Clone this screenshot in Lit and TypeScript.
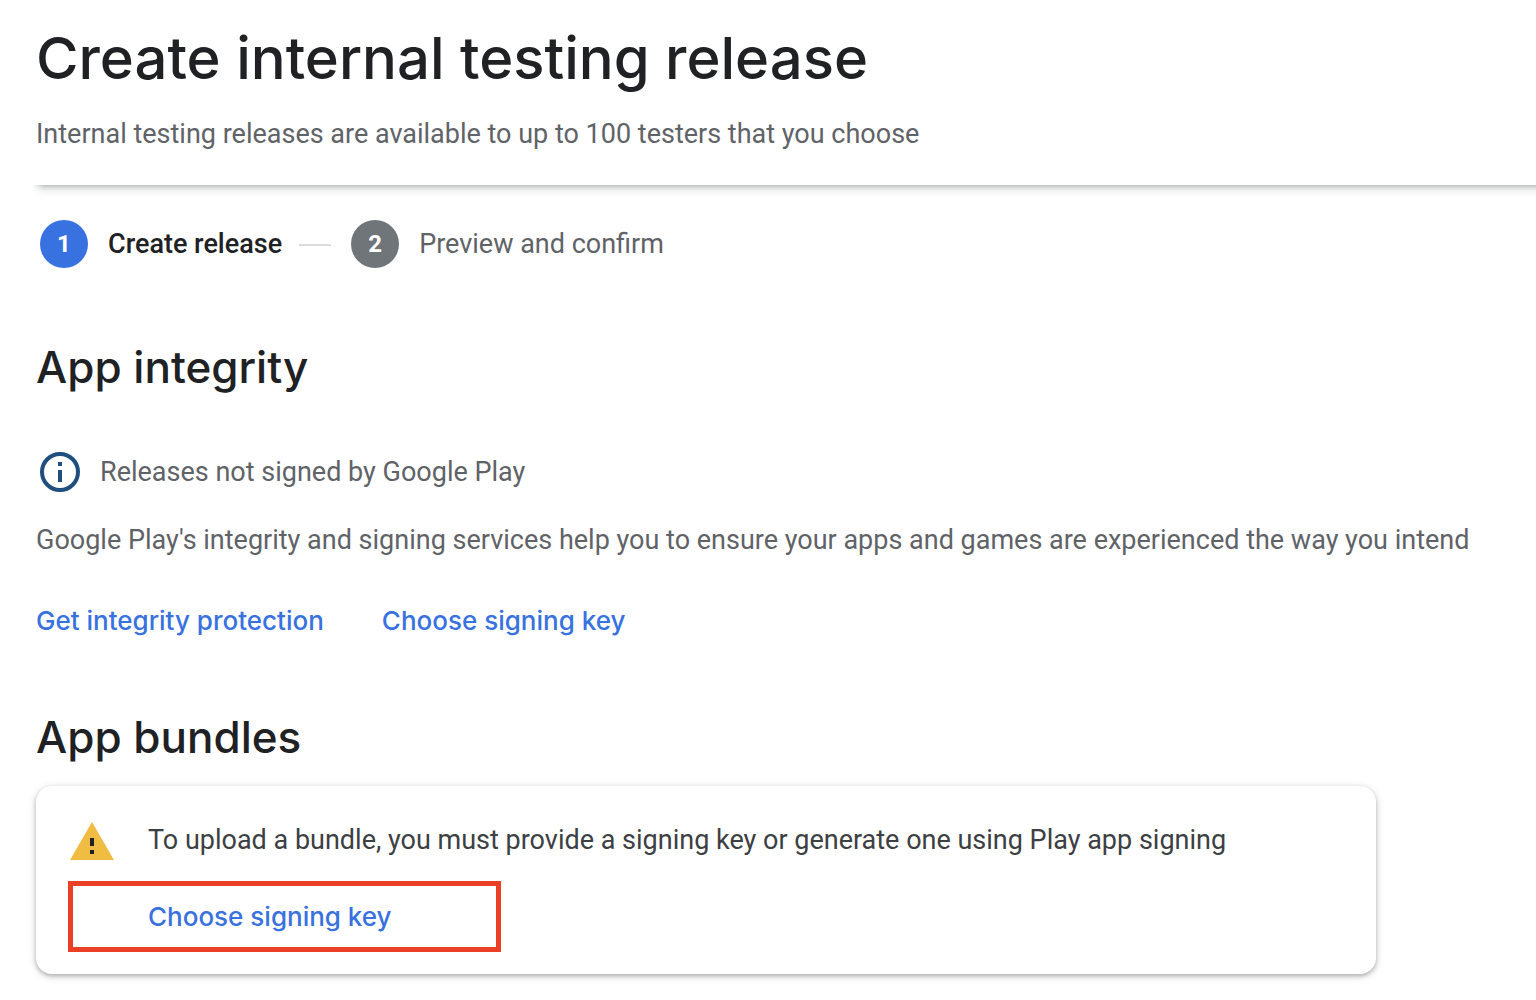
import { LitElement, html, css } from "lit";
import { customElement } from "lit/decorators.js";

@customElement("app-root")
export class AppRoot extends LitElement {
  static styles = css`
    :host { display: block; min-height: 100vh; background: #fff; color: #5f6368; font: 27px/40px Roboto, sans-serif; }
    * { box-sizing: border-box; }
    h1, h2, p, ol { margin: 0; padding: 0; }
    header { padding: 18px 0 31px 36px; }
    .rule { height: 12px; margin-left: 32px; background: linear-gradient(#bfc2c1, #dfe0e0 3px, #f4f4f4 6px, #fff); mask-image: linear-gradient(to right, transparent, #000 12px); }
    h1, h2 { color: #202124; font-family: Inter, sans-serif; font-weight: 500; }
    h1 { font-size: 58px; line-height: 80px; }
    h2 { font-size: 44px; line-height: 56px; }
    .sub { margin-top: 16px; }
    main { padding: 23px 36px 24px; }
    .steps { display: flex; align-items: center; list-style: none; padding-left: 4px; }
    .steps li { display: flex; align-items: center; gap: 20px; }
    .num { width: 48px; height: 48px; border-radius: 50%; background: #70757a; color: #fff; display: grid; place-items: center; font-size: 24px; font-weight: 700; }
    .current { color: #202124; font-weight: 500; }
    .current .num { background: #3871e0; }
    .next::before { content: ""; width: 32px; height: 2px; background: #dadce0; margin: 2px 0 0 17px; }
    .integrity { margin-top: 71px; }
    .info { display: flex; align-items: center; gap: 20px; padding-left: 4px; margin-top: 57px; }
    .desc { margin-top: 28px; }
    .links { display: flex; gap: 58px; margin-top: 41px; }
    a { color: #3871e0; font-family: Inter, sans-serif; font-size: 26px; font-weight: 500; text-decoration: none; }
    .bundles { margin-top: 68px; }
    .card { margin-top: 21px; max-width: 1340px; border-radius: 16px; padding: 34px 32px 22px; box-shadow: 0 2px 4px rgba(0, 0, 0, 0.24), 0 2px 10px rgba(0, 0, 0, 0.14); color: #3c4043; }
    .warn { display: flex; gap: 34px; align-items: center; padding-left: 2px; }
    .warn svg { flex: none; }
    .action { display: flex; border: 5px solid #ea4025; max-width: 433px; padding: 11px 75px 10px; margin-top: 21px; }
  `;
  render() {
    return html`
      <header>
        <h1>Create internal testing release</h1>
        <p class="sub">Internal testing releases are available to up to 100 testers that you choose</p>
      </header>
      <div class="rule"></div>
      <main>
        <ol class="steps">
          <li class="current"><span class="num">1</span>Create release</li>
          <li class="next"><span class="num">2</span>Preview and confirm</li>
        </ol>
        <section class="integrity">
          <h2>App integrity</h2>
          <div class="info">
            <svg width="40" height="40" viewBox="0 0 40 40" aria-hidden="true"><circle cx="20" cy="20" r="18" fill="none" stroke="#1f4f7f" stroke-width="4"/><path d="M18 18h4v12h-4zM18 10h4v4h-4z" fill="#1f4f7f"/></svg>
            <p>Releases not signed by Google Play</p>
          </div>
          <p class="desc">Google Play's integrity and signing services help you to ensure your apps and games are experienced the way you intend</p>
          <div class="links"><a href="#">Get integrity protection</a><a href="#">Choose signing key</a></div>
        </section>
        <section class="bundles">
          <h2>App bundles</h2>
          <div class="card">
            <div class="warn">
              <svg width="44" height="40" viewBox="0 0 44 40" aria-hidden="true"><path d="M22 2L44 40H0z" fill="#f0bd42"/><path d="M20 18h4v8h-4zM20 30h4v4h-4z" fill="#202124"/></svg>
              <p>To upload a bundle, you must provide a signing key or generate one using Play app signing</p>
            </div>
            <div class="action"><a href="#">Choose signing key</a></div>
          </div>
        </section>
      </main>`;
  }
}
